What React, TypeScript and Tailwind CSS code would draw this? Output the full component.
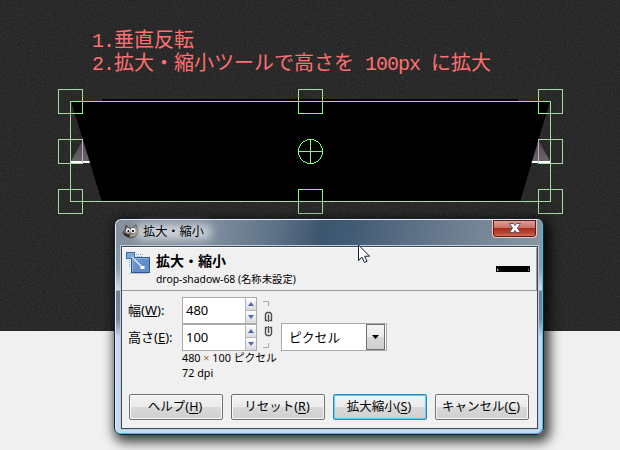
import type { ReactNode } from "react";

const ui = "font-['Noto_Sans','Noto_Sans_CJK_JP',sans-serif]";

function Handle({ x, y }: { x: number; y: number }) {
  return <rect x={x - 12} y={y - 12} width="24" height="24" />;
}

function Canvas() {
  return (
    <svg className="absolute left-0 top-0" width="620" height="331" viewBox="0 0 620 331">
      <defs>
        <filter id="grain" x="0" y="0" width="100%" height="100%">
          <feTurbulence type="fractalNoise" baseFrequency="0.8" numOctaves="2" seed="4" />
          <feColorMatrix values="0 0 0 0 1  0 0 0 0 1  0 0 0 0 1  0.5 0 0 0 -0.2" />
        </filter>
        <linearGradient id="fade" x1="0" y1="0" x2="0" y2="1">
          <stop offset="0" stopColor="#484848" />
          <stop offset="1" stopColor="#666" />
        </linearGradient>
      </defs>
      <rect width="620" height="331" fill="#262626" />
      <rect width="620" height="331" filter="url(#grain)" opacity="0.35" />
      <path d="M84 138 L71 161 H97 Z M537 138 L550 161 H524 Z" fill="url(#fade)" />
      <path d="M71 161h26v2h-26zM525 161h25v2h-25z" fill="#fff" />
      <path d="M102 99H518V101H550L520 202H102L71 101H102Z" fill="#000" />
      <g fill="none" stroke="#a5dca5" shapeRendering="crispEdges">
        <rect x="70.5" y="101.5" width="480" height="100" />
        <Handle x={70.5} y={101.5} />
        <Handle x={310.5} y={101.5} />
        <Handle x={550.5} y={101.5} />
        <Handle x={70.5} y={151.5} />
        <Handle x={550.5} y={151.5} />
        <Handle x={70.5} y={201.5} />
        <Handle x={310.5} y={201.5} />
        <Handle x={550.5} y={201.5} />
      </g>
      <g fill="none" stroke="#80ff80" shapeRendering="crispEdges">
        <path d="M71 101.5H550M73 113.5H82.5V102M298.5 102V113.5H322.5V102M538.5 102V113.5H546M298.5 201V189.5H322.5V201" />
        <circle cx="310.5" cy="151.5" r="12" />
        <path d="M298 151.5H323M310.5 139V164" />
      </g>
      <path d="M82.5 140V161M538.5 140V161" stroke="#d6a3d6" shapeRendering="crispEdges" />
    </svg>
  );
}

function GimpIcon() {
  return (
    <svg width="17" height="16" viewBox="0 0 17 16">
      <path d="M3 6L4 1 7 4 10 4 14 0.500 15.500 5 16 9 13 13 8 14 4 12 1 8Z" fill="#77736b" stroke="#35332f" strokeWidth=".7" />
      <ellipse cx="6" cy="6.500" rx="2" ry="2.200" fill="#fff" />
      <ellipse cx="11" cy="6.500" rx="2.500" ry="2.500" fill="#fff" />
      <circle cx="6.300" cy="7" r="1" />
      <circle cx="11" cy="7" r="1.200" />
      <path d="M0 8L4 10 9 11 7 13 3 12Z" fill="#282622" />
      <path d="M8 12L13 11" stroke="#bcae93" />
    </svg>
  );
}

function ScaleIcon() {
  return (
    <svg width="25" height="24" viewBox="0 0 25 24">
      <path d="M3 21.500H22" stroke="#c4c4c4" />
      <rect x="5.500" y="5.500" width="18" height="15" fill="#628fca" stroke="#2c5798" />
      <path d="M6.500 19.500V6.500H22.500" fill="none" stroke="#8db2e0" />
      <rect x=".5" y=".5" width="8" height="6" fill="#7ea6d8" stroke="#3d69a9" />
      <path d="M10 2.500H17M3.500 8V16M11 4.500H17M8.500 9V17M9 8.500H17" stroke="#91a9c9" strokeDasharray="1 1" />
      <path d="M6 5L16 15" stroke="#e8f0fa" strokeWidth="1.200" />
      <rect x="14.500" y="14" width="4" height="3" fill="#fff" />
    </svg>
  );
}

function Spin({ value }: { value: string }) {
  return (
    <div className="flex h-[27px] w-[75px] border border-[#aaa] bg-white">
      <span className="flex-1 pl-[3px] text-[13px] leading-[24px]">{value}</span>
      <div className="flex w-[11px] flex-col border-l border-[#b5b5b8] bg-[#f4f4f4]">
        <div className="flex flex-1 items-center justify-center border-b border-[#b5b5b8] bg-linear-to-b from-white to-[#dadade]">
          <svg width="6" height="4"><path d="M0 4L3 0 6 4Z" fill="#5165b5" /></svg>
        </div>
        <div className="flex flex-1 items-center justify-center bg-linear-to-b from-white to-[#dadade]">
          <svg width="6" height="4"><path d="M0 0H6L3 4Z" fill="#5165b5" /></svg>
        </div>
      </div>
    </div>
  );
}

function Button({ children, mnemonic, active }: { children: ReactNode; mnemonic: string; active?: boolean }) {
  return (
    <button
      className={
        "flex h-[26px] w-[94px] items-center justify-center whitespace-nowrap rounded-[2px] border bg-[linear-gradient(#f3f3f3,#eaeaea_50%,#d9d9d9_51%,#cfcfcf)] pr-[2px] pt-px text-[12.5px] leading-none " +
        (active ? "border-[#3587ad] shadow-[inset_0_0_0_1px_#55cdf5]" : "border-[#707070] shadow-[inset_0_0_0_1px_#f8f8f8]")
      }
    >
      {children}(<span className="underline underline-offset-2">{mnemonic}</span>)
    </button>
  );
}

function Dialog() {
  return (
    <div className={`absolute left-[114px] top-[218px] flex h-[217px] w-[430px] flex-col rounded-[7px] border border-[#14202c] bg-[linear-gradient(#7d8b99_0px,#8f9dab_50px,#d4dde6_71px,#6f8092_72px,#77889a_100px,#c6daef_118px,#c3daf3)] text-black shadow-[3px_4px_12px_3px_rgba(0,0,0,0.75),inset_-1px_-1px_0_#35c8ec,inset_1px_1px_0_#e4edf5] ${ui}`}>
      <div className="mx-px mt-px flex h-[26px] shrink-0 items-start rounded-t-[5px] bg-[linear-gradient(100deg,#85919d_0%,#7c8b9b_24%,#5c7086_38%,#3d566f_48%,#435c75_56%,#5a6e84_68%,#748496_84%,#8996a3_100%)]">
        <div className="ml-[6px] mt-[4px]"><GimpIcon /></div>
        <span className="relative ml-[4px] mt-[3px] text-[12.2px] leading-[18px]">
          <span className="absolute -inset-x-2 inset-y-px rounded-full bg-white/60 blur-[5px]" />
          <span className="relative">拡大・縮小</span>
        </span>
        <div className="ml-auto mr-[5px] flex h-[18px] w-[45px] items-center justify-center rounded-b-[4px] border border-t-0 border-[#e3c9c7] bg-[linear-gradient(#e0a89f,#cc7265_45%,#aa2d20_50%,#ba4430_75%,#d87960)] shadow-[inset_0_0_0_1px_#5d1c1a]">
          <svg className="-mt-px" width="12" height="10" viewBox="0 0 12 10">
            <path d="M.5.5H4.500L6 2.500 7.500.5H11.500L8.500 5 11.500 9.500H7.500L6 7.500 4.500 9.500H.5L3.500 5Z" fill="#fff" stroke="#5d5364" />
          </svg>
        </div>
      </div>
      <div className="ml-[6px] mr-[5px] flex h-[183px] flex-col border border-[#38495b] bg-[#f0f0f0] outline outline-1 outline-[#c3cfdb]">
        <div className="flex h-[44px] shrink-0 items-start border-b border-r border-[#9b9b9b] border-t border-t-white">
          <div className="ml-1 mt-[4px]"><ScaleIcon /></div>
          <div className="ml-[5px] mt-[3px] flex flex-col whitespace-nowrap">
            <span className="text-[14px] font-bold leading-[20px]">拡大・縮小</span>
            <span className="text-[10.35px] leading-[17px]">drop-shadow-68 (名称未設定)</span>
          </div>
          <svg className="ml-auto mr-[6px] mt-[18px]" width="34" height="6">
            <rect width="34" height="6" />
            <path d="M1 2L3 5H1ZM33 2L32 5H33Z" fill="#aaa" />
          </svg>
        </div>
        <div className="flex pl-[6px] pt-[6px]">
          <div className="flex w-[54px] flex-col text-[13px] leading-[26.5px]">
            <span>幅(<u>W</u>):</span>
            <span>高さ(<u>E</u>):</span>
          </div>
          <div className="flex w-[75px] flex-col">
            <Spin value="480" />
            <Spin value="100" />
            <div className="-mt-px whitespace-nowrap text-[10.8px] leading-[15px]">
              <div>480 <span className="text-[#9c6a3c]">×</span> 100 ピクセル</div>
              <div>72 dpi</div>
            </div>
          </div>
          <svg className="ml-[4px] mt-[4px]" width="12" height="48" viewBox="0 0 12 48" fill="none">
            <path d="M2 .5H7.500V5M2 46.500H7.500V42" stroke="#aaa" />
            <path d="M6 19.500H4.500V13L6 11.500H9L10.500 13V19.500H9M7.500 13.500V21M6 26.500H4.500V33L6 34.500H9L10.500 33V26.500H9M7.500 25V32" stroke="#4b4e4a" strokeWidth="1.400" />
            <path d="M6 19.500H9M6 26.500H9" stroke="#777" />
          </svg>
          <div className="ml-[8px] mt-[26px] flex h-[28px] w-[106px] border border-[#aaa] bg-white pr-px">
            <span className="flex-1 pl-[7px] text-[12.8px] leading-[26px]">ピクセル</span>
            <div className="flex w-[19px] items-center justify-center border border-[#707070] bg-[linear-gradient(#f3f3f3,#eaeaea_50%,#d9d9d9_51%,#cfcfcf)]">
              <svg width="7" height="4"><path d="M0 0H7L3.500 4Z" /></svg>
            </div>
          </div>
        </div>
        <div className="mb-[8px] ml-[7px] mt-auto flex gap-[8px]">
          <Button mnemonic="H">ヘルプ</Button>
          <Button mnemonic="R">リセット</Button>
          <Button mnemonic="S" active>拡大縮小</Button>
          <Button mnemonic="C">キャンセル</Button>
        </div>
      </div>
    </div>
  );
}

export default function App() {
  return (
    <div className="relative h-[450px] w-[620px] overflow-hidden bg-[#f0f0f0]">
      <Canvas />
      <div className="relative whitespace-pre pl-[92px] pt-[30px] font-['Liberation_Mono','Noto_Sans_CJK_JP',monospace] text-[20px] leading-[23px] text-[#ff7070]">
        <div><span className="tracking-[-1px]">1.</span>垂直反転</div>
        <div><span className="tracking-[-1px]">2.</span>拡大・縮小ツールで高さを<span className="tracking-[-1px]"> 100px </span>に拡大</div>
      </div>
      <Dialog />
      <svg className="absolute left-[357px] top-[244px]" width="14" height="20" viewBox="0 0 14 20">
        <path d="M1.500 1V16.500L5 13.200 7.500 18.500 10 17.300 7.600 12.200H12.500Z" fill="#fff" stroke="#152033" />
      </svg>
    </div>
  );
}
